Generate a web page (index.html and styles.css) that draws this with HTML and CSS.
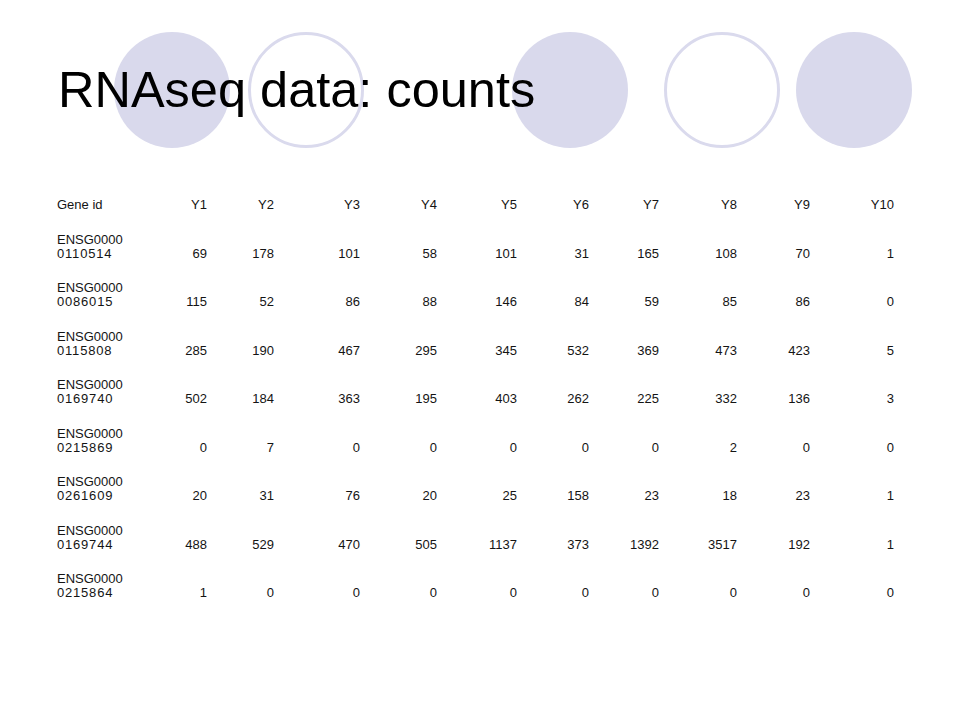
FILE: index.html
```html
<!DOCTYPE html>
<html>
<head>
<meta charset="utf-8">
<link rel="stylesheet" href="styles.css">
</head>
<body>
<div class="slide">
  <div class="decor">
    <div class="circle filled c1"></div>
    <div class="circle ring c2"></div>
    <div class="circle filled c3"></div>
    <div class="circle ring c4"></div>
    <div class="circle filled c5"></div>
  </div>
  <h1 class="title">RNAseq data: counts</h1>
  <div class="table">
    <div class="cell gene">Gene id</div><div class="cell num">Y1</div><div class="cell num">Y2</div><div class="cell num">Y3</div><div class="cell num">Y4</div><div class="cell num">Y5</div><div class="cell num">Y6</div><div class="cell num">Y7</div><div class="cell num">Y8</div><div class="cell num">Y9</div><div class="cell num">Y10</div>

    <div class="cell gene"><span class="l1">ENSG0000</span><span class="l2">0110514</span></div><div class="cell num">69</div><div class="cell num">178</div><div class="cell num">101</div><div class="cell num">58</div><div class="cell num">101</div><div class="cell num">31</div><div class="cell num">165</div><div class="cell num">108</div><div class="cell num">70</div><div class="cell num">1</div>

    <div class="cell gene"><span class="l1">ENSG0000</span><span class="l2">0086015</span></div><div class="cell num">115</div><div class="cell num">52</div><div class="cell num">86</div><div class="cell num">88</div><div class="cell num">146</div><div class="cell num">84</div><div class="cell num">59</div><div class="cell num">85</div><div class="cell num">86</div><div class="cell num">0</div>

    <div class="cell gene"><span class="l1">ENSG0000</span><span class="l2">0115808</span></div><div class="cell num">285</div><div class="cell num">190</div><div class="cell num">467</div><div class="cell num">295</div><div class="cell num">345</div><div class="cell num">532</div><div class="cell num">369</div><div class="cell num">473</div><div class="cell num">423</div><div class="cell num">5</div>

    <div class="cell gene"><span class="l1">ENSG0000</span><span class="l2">0169740</span></div><div class="cell num">502</div><div class="cell num">184</div><div class="cell num">363</div><div class="cell num">195</div><div class="cell num">403</div><div class="cell num">262</div><div class="cell num">225</div><div class="cell num">332</div><div class="cell num">136</div><div class="cell num">3</div>

    <div class="cell gene"><span class="l1">ENSG0000</span><span class="l2">0215869</span></div><div class="cell num">0</div><div class="cell num">7</div><div class="cell num">0</div><div class="cell num">0</div><div class="cell num">0</div><div class="cell num">0</div><div class="cell num">0</div><div class="cell num">2</div><div class="cell num">0</div><div class="cell num">0</div>

    <div class="cell gene"><span class="l1">ENSG0000</span><span class="l2">0261609</span></div><div class="cell num">20</div><div class="cell num">31</div><div class="cell num">76</div><div class="cell num">20</div><div class="cell num">25</div><div class="cell num">158</div><div class="cell num">23</div><div class="cell num">18</div><div class="cell num">23</div><div class="cell num">1</div>

    <div class="cell gene"><span class="l1">ENSG0000</span><span class="l2">0169744</span></div><div class="cell num">488</div><div class="cell num">529</div><div class="cell num">470</div><div class="cell num">505</div><div class="cell num">1137</div><div class="cell num">373</div><div class="cell num">1392</div><div class="cell num">3517</div><div class="cell num">192</div><div class="cell num">1</div>

    <div class="cell gene"><span class="l1">ENSG0000</span><span class="l2">0215864</span></div><div class="cell num">1</div><div class="cell num">0</div><div class="cell num">0</div><div class="cell num">0</div><div class="cell num">0</div><div class="cell num">0</div><div class="cell num">0</div><div class="cell num">0</div><div class="cell num">0</div><div class="cell num">0</div>
  </div>
</div>
</body>
</html>
```
FILE: styles.css
```css
html, body {
  margin: 0;
  padding: 0;
  background: #ffffff;
}

.slide {
  position: relative;
  width: 960px;
  height: 720px;
  overflow: hidden;
  font-family: "Liberation Sans", Arial, sans-serif;
  color: #000;
  padding-top: 65px;
  box-sizing: border-box;
}

.decor {
  position: absolute;
  inset: 0;
  z-index: 0;
}

.circle {
  position: absolute;
  top: 32px;
  width: 116px;
  height: 116px;
  border-radius: 50%;
  box-sizing: border-box;
}

.filled {
  background: #d9d9ec;
}

.ring {
  border: 3px solid #dadaed;
  background: #fff;
}

.c1 { left: 114px; }
.c2 { left: 248px; }
.c3 { left: 512px; }
.c4 { left: 664px; }
.c5 { left: 796px; }

.title {
  position: relative;
  z-index: 1;
  margin: 0 0 0 58px;
  font-size: 50.5px;
  line-height: 50px;
  font-weight: normal;
  letter-spacing: 0;
}

.table {
  position: relative;
  z-index: 1;
  margin: 73px 0 0 57px;
  display: grid;
  grid-template-columns: 90px 60px 67px 86px 77px 80px 72px 70px 78px 73px 84px;
  font-size: 13px;
  line-height: 14px;
  color: #141414;
}

.cell {
  padding: 10.25px 0;
  align-self: end;
  white-space: nowrap;
}

.num {
  text-align: right;
}

.gene .l1,
.gene .l2 {
  display: block;
}

.gene .l2 {
  letter-spacing: 0.8px;
}
```
